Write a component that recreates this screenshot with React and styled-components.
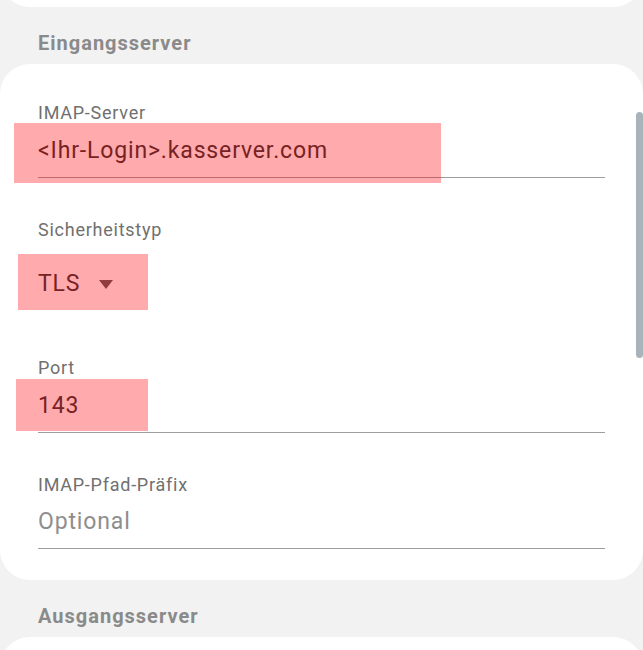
import React from 'react'
import styled, { createGlobalStyle } from 'styled-components'

const GlobalStyle = createGlobalStyle`
  html, body {
    margin: 0;
    padding: 0;
    background: #f2f2f2;
  }
  body {
    font-family: Roboto, "Noto Sans", "Liberation Sans", sans-serif;
  }
`

const Screen = styled.div`
  position: relative;
  width: 643px;
  height: 650px;
  overflow: hidden;
  background: #f2f2f2;
`

const Card = styled.div`
  background: #fff;
  border-radius: 30px;
  padding: 0 38px;
  ${({ $clipTop }) => $clipTop && 'margin-top: -53px; height: 60px; padding: 0;'}
  ${({ $peek }) => $peek && 'height: 60px;'}
  ${({ $main }) => $main && 'padding-bottom: 31px;'}
`

const SectionTitle = styled.h2`
  margin: 0;
  padding: 24px 38px 9px;
  font-size: 20px;
  line-height: 24px;
  font-weight: 700;
  letter-spacing: 1px;
  color: #8a8a8a;
`

const Field = styled.div`
  padding-top: 41px;
  &:first-child {
    padding-top: 38px;
  }
  ${({ $underline }) => $underline && `
    padding-bottom: 12px;
    border-bottom: 1px solid #9e9e9e;
  `}
  ${({ $select }) => $select && 'padding-bottom: 18px;'}
`

const Label = styled.div`
  font-size: 18px;
  line-height: 22px;
  letter-spacing: 0.75px;
  color: #707070;
`

const ValueRow = styled.div`
  position: relative;
  display: flex;
  align-items: center;
  margin-top: ${({ $gap }) => $gap || 13}px;
  height: 28px;
  font-size: 23px;
  line-height: 28px;
  letter-spacing: 0.85px;
  color: ${({ $placeholder }) => ($placeholder ? '#8e8e8e' : '#333')};
`

const Caret = styled.span`
  margin-left: 19px;
  width: 0;
  height: 0;
  border-left: 7px solid transparent;
  border-right: 7px solid transparent;
  border-top: 9px solid #5a5a5a;
`

// the pink marks drawn over the screenshot
const Highlight = styled.div`
  position: absolute;
  left: ${({ $left }) => $left}px;
  top: ${({ $top }) => $top}px;
  width: ${({ $width }) => $width}px;
  height: ${({ $height }) => $height}px;
  background: rgba(255, 0, 6, 0.335);
  pointer-events: none;
`

const Scrollbar = styled.div`
  position: absolute;
  right: 0;
  top: 112px;
  width: 7px;
  height: 246px;
  border-radius: 4px;
  background: #a8b4ba;
`

const App = () => (
  <Screen>
    <GlobalStyle />
    <Card $clipTop />

    <SectionTitle>Eingangsserver</SectionTitle>
    <Card $main>
      <Field $underline>
        <Label>IMAP-Server</Label>
        <ValueRow>
          &lt;Ihr-Login&gt;.kasserver.com
          <Highlight $left={-24} $top={-14} $width={427} $height={60} />
        </ValueRow>
      </Field>

      <Field $select>
        <Label>Sicherheitstyp</Label>
        <ValueRow $gap={29}>
          TLS
          <Caret />
          <Highlight $left={-20} $top={-16} $width={130} $height={56} />
        </ValueRow>
      </Field>

      <Field $underline>
        <Label>Port</Label>
        <ValueRow>
          143
          <Highlight $left={-22} $top={-13} $width={132} $height={52} />
        </ValueRow>
      </Field>

      <Field $underline>
        <Label>IMAP-Pfad-Präfix</Label>
        <ValueRow $gap={12} $placeholder>Optional</ValueRow>
      </Field>
    </Card>

    <SectionTitle>Ausgangsserver</SectionTitle>
    <Card $peek />

    <Scrollbar />
  </Screen>
)

export default App
